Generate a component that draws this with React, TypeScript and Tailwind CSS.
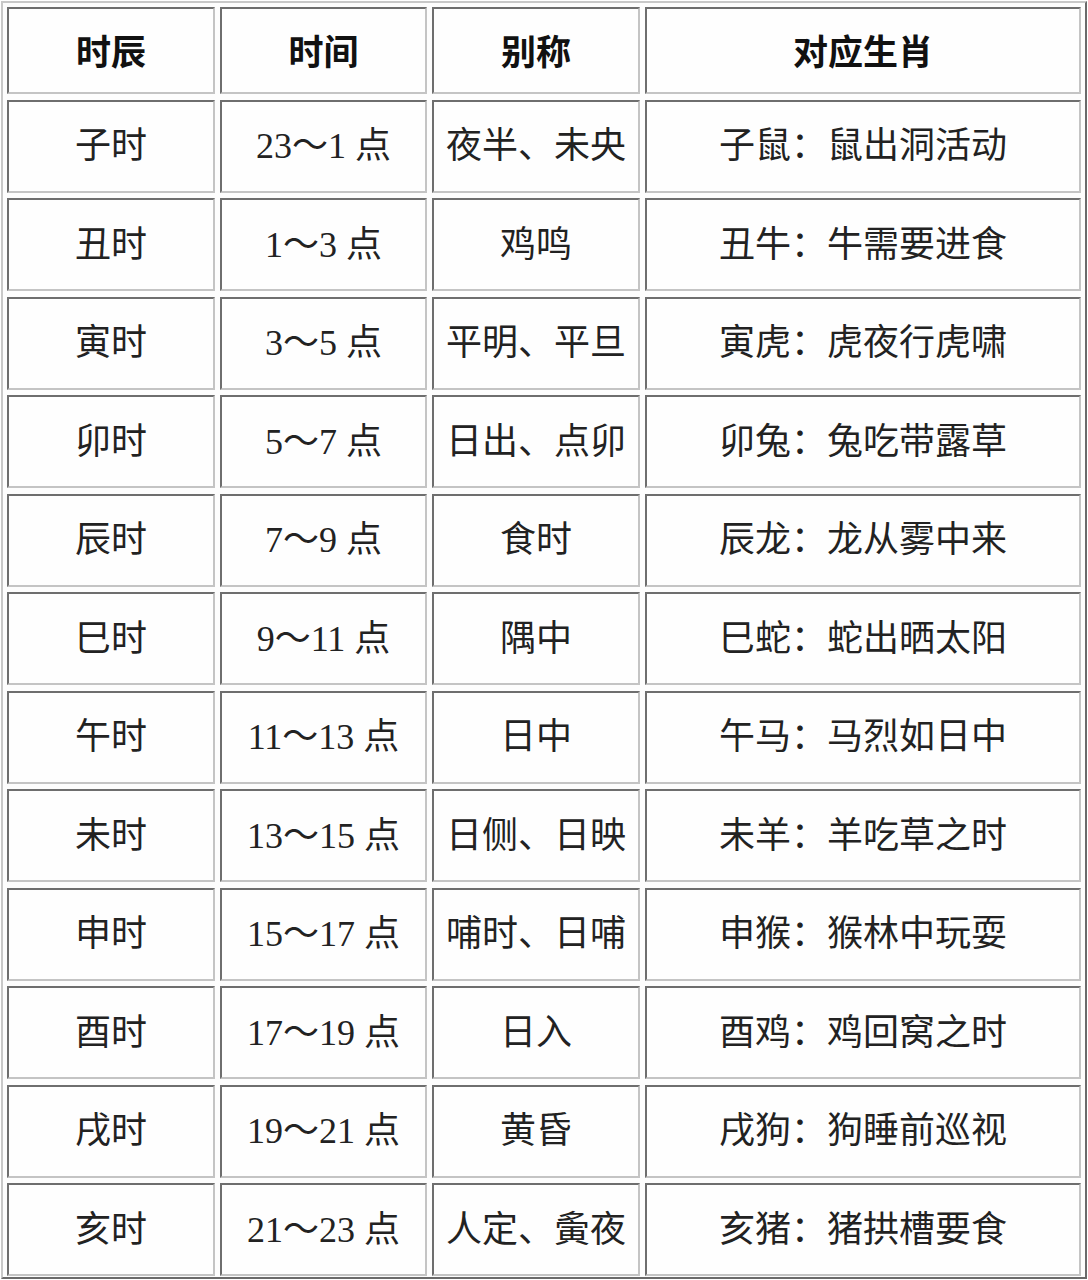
import React from "react";

const ROWS: [string, string, string, string][] = [
  ["子时", "23～1 点", "夜半、未央", "子鼠：鼠出洞活动"],
  ["丑时", "1～3 点", "鸡鸣", "丑牛：牛需要进食"],
  ["寅时", "3～5 点", "平明、平旦", "寅虎：虎夜行虎啸"],
  ["卯时", "5～7 点", "日出、点卯", "卯兔：兔吃带露草"],
  ["辰时", "7～9 点", "食时", "辰龙：龙从雾中来"],
  ["巳时", "9～11 点", "隅中", "巳蛇：蛇出晒太阳"],
  ["午时", "11～13 点", "日中", "午马：马烈如日中"],
  ["未时", "13～15 点", "日侧、日映", "未羊：羊吃草之时"],
  ["申时", "15～17 点", "哺时、日哺", "申猴：猴林中玩耍"],
  ["酉时", "17～19 点", "日入", "酉鸡：鸡回窝之时"],
  ["戌时", "19～21 点", "黄昏", "戌狗：狗睡前巡视"],
  ["亥时", "21～23 点", "人定、夤夜", "亥猪：猪拱槽要食"],
];

const HEADERS = ["时辰", "时间", "别称", "对应生肖"];

const cellClasses =
  "flex items-center justify-center bg-[#fefefe] border-t-2 border-l-2 border-b-2 border-r-2 border-t-[#6e6e6e] border-l-[#6e6e6e] border-b-[#c4c4c4] border-r-[#c4c4c4]";

export default function App() {
  return (
    <div className="w-[1088px] h-[1280px] bg-white p-[1px]">
      <div
        className="h-full w-full bg-[#fdfdfd] p-[4px] border-2 border-t-[#c8c8c8] border-l-[#c8c8c8] border-b-[#6a6a6a] border-r-[#6a6a6a]"
        style={{ fontFamily: '"Liberation Serif", "Noto Sans CJK SC", serif' }}
      >
        <div className="grid grid-cols-[208px_207px_208px_1fr] grid-rows-[87px_repeat(12,93px)] gap-x-[5px] gap-y-[5.5px]">
          {HEADERS.map((h) => (
            <div
              key={h}
              className={`${cellClasses} text-[35px] font-bold text-[#111]`}
              style={{ fontFamily: '"Noto Sans CJK SC", sans-serif' }}
            >
              {h}
            </div>
          ))}
          {ROWS.map((row) =>
            row.map((text, i) => (
              <div key={row[0] + i} className={`${cellClasses} text-[36px] text-[#222] leading-none`}>
                {text}
              </div>
            ))
          )}
        </div>
      </div>
    </div>
  );
}
